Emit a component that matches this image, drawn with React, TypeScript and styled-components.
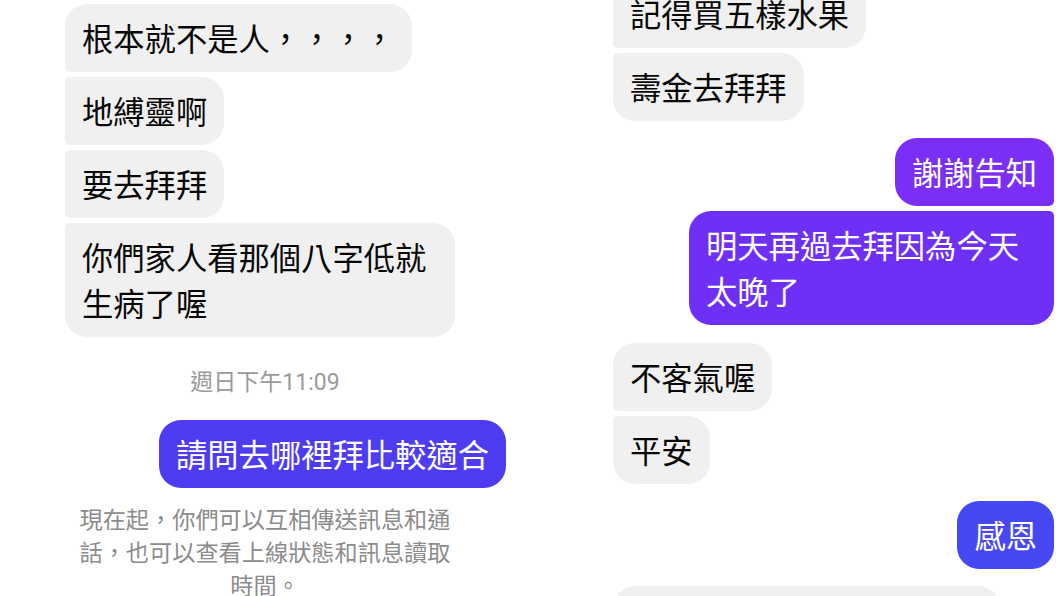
import React from 'react';
import styled, { createGlobalStyle } from 'styled-components';

const GlobalStyle = createGlobalStyle`
  html, body { margin: 0; padding: 0; background: #ffffff; }
  body {
    width: 1060px;
    height: 596px;
    overflow: hidden;
    font-family: Roboto, "Noto Sans CJK TC", "Noto Sans CJK SC", sans-serif;
  }
`;

const Page = styled.main`
  display: flex;
  gap: 18px;
  width: 1060px;
  height: 596px;
  overflow: hidden;
  background: #ffffff;
`;

const Panel = styled.section<{ $w: number }>`
  flex: none;
  width: ${(p) => p.$w}px;
  display: flex;
  flex-direction: column;
`;

const Group = styled.div<{ $side: 'in' | 'out'; $inset: number; $top: number; $gap: number }>`
  display: flex;
  flex-direction: column;
  gap: ${(p) => p.$gap}px;
  align-items: ${(p) => (p.$side === 'in' ? 'flex-start' : 'flex-end')};
  margin-top: ${(p) => p.$top}px;
  padding-left: ${(p) => (p.$side === 'in' ? p.$inset : 0)}px;
  padding-right: ${(p) => (p.$side === 'out' ? p.$inset : 0)}px;
`;

const Bubble = styled.div<{ $bg: string; $fg: string; $radius: string; $max: number; $w?: number }>`
  box-sizing: border-box;
  max-width: ${(p) => p.$max}px;
  ${(p) => (p.$w ? `width: ${p.$w}px;` : '')}
  padding: 14px 17px 8px;
  border-radius: ${(p) => p.$radius};
  background: ${(p) => p.$bg};
  color: ${(p) => p.$fg};
  font-size: 31.3px;
  line-height: 46px;
  word-break: break-all;
`;

const Stamp = styled.div<{ $top: number }>`
  margin-top: ${(p) => p.$top}px;
  text-align: center;
  color: #9a9a9a;
  font-size: 23px;
  line-height: 30px;
`;

const Note = styled.p<{ $top: number }>`
  margin: ${(p) => p.$top}px auto 0;
  width: 384px;
  text-align: center;
  color: #8c8c8c;
  font-size: 23.2px;
  line-height: 33px;
`;

const R = 22;
const r = 5;
const rad = (tl: number, tr: number, br: number, bl: number) => `${tl}px ${tr}px ${br}px ${bl}px`;

const GRAY = '#f0f0f0';
const INK = '#080808';

type Msg = { text: string; radius: string; bg?: string; w?: number };

const Received = ({ msgs, top, gap, max }: { msgs: Msg[]; top: number; gap: number; max: number }) => (
  <Group $side="in" $inset={65} $top={top} $gap={gap}>
    {msgs.map((m, i) => (
      <Bubble key={i} $bg={GRAY} $fg={INK} $radius={m.radius} $max={max} $w={m.w}>
        {m.text}
      </Bubble>
    ))}
  </Group>
);

const Sent = ({ msgs, top, gap, max, inset }: { msgs: Msg[]; top: number; gap: number; max: number; inset: number }) => (
  <Group $side="out" $inset={inset} $top={top} $gap={gap}>
    {msgs.map((m, i) => (
      <Bubble key={i} $bg={m.bg || '#4d3cf1'} $fg="#ffffff" $radius={m.radius} $max={max}>
        {m.text}
      </Bubble>
    ))}
  </Group>
);

export default function App() {
  return (
    <>
      <GlobalStyle />
      <Page>
        <Panel $w={530}>
          <Received
            top={4}
            gap={5}
            max={390}
            msgs={[
              { text: '根本就不是人，，，，', radius: rad(R, R, R, r) },
              { text: '地縛靈啊', radius: rad(r, R, R, r) },
              { text: '要去拜拜', radius: rad(r, R, R, r) },
              { text: '你們家人看那個八字低就生病了喔', radius: rad(r, R, R, R) },
            ]}
          />
          <Stamp $top={31}>週日下午11:09</Stamp>
          <Sent
            top={22}
            gap={5}
            max={390}
            inset={24}
            msgs={[{ text: '請問去哪裡拜比較適合', radius: rad(R, R, R, R), bg: '#4d3cf1' }]}
          />
          <Note $top={16}>現在起，你們可以互相傳送訊息和通話，也可以查看上線狀態和訊息讀取時間。</Note>
        </Panel>
        <Panel $w={512}>
          <Received
            top={-20}
            gap={5}
            max={365}
            msgs={[
              { text: '記得買五樣水果', radius: rad(r, R, R, r) },
              { text: '壽金去拜拜', radius: rad(r, R, R, R) },
            ]}
          />
          <Sent
            top={17}
            gap={5}
            max={365}
            inset={6}
            msgs={[
              { text: '謝謝告知', radius: rad(R, R, r, R), bg: '#7a2ef6' },
              { text: '明天再過去拜因為今天太晚了', radius: rad(R, r, R, R), bg: '#6e2ff6' },
            ]}
          />
          <Received
            top={18}
            gap={5}
            max={365}
            msgs={[
              { text: '不客氣喔', radius: rad(R, R, R, r) },
              { text: '平安', radius: rad(r, R, R, R) },
            ]}
          />
          <Sent
            top={17}
            gap={5}
            max={365}
            inset={6}
            msgs={[{ text: '感恩', radius: rad(R, R, R, R), bg: '#4548f3' }]}
          />
          <Received
            top={17}
            gap={5}
            max={400}
            msgs={[{ text: '\u3000', radius: rad(R, R, R, r), w: 387 }]}
          />
        </Panel>
      </Page>
    </>
  );
}
